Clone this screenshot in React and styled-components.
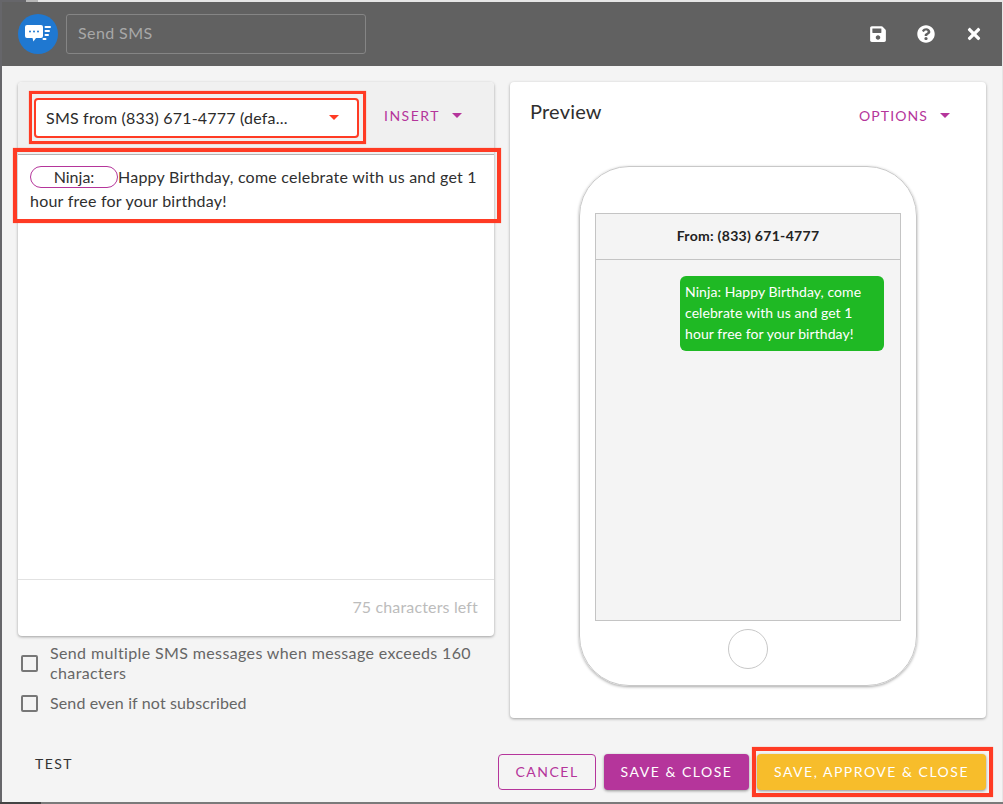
import React from 'react'
import styled, { createGlobalStyle } from 'styled-components'
import { FaSave, FaQuestionCircle, FaTimes } from 'react-icons/fa'

const purple = '#b5359b'
const annotation = '#ff3b24'

const GlobalStyle = createGlobalStyle`
  html, body {
    margin: 0;
    padding: 0;
    background: #66666a;
    font-family: Lato, "Noto Sans", sans-serif;
  }
  * { box-sizing: border-box; }
`

const Screen = styled.div`
  width: 1003px;
  height: 804px;
  overflow: hidden;
  position: relative;
  padding: 2px 0 2px 2px;
  background:
    linear-gradient(to right, #66666a 26px, #b8b8b8 26px, #b8b8b8 38px, #e6e6e6 38px) top / 100% 2px no-repeat,
    linear-gradient(to right, #444 41px, #7a7a7a 41px) bottom / 100% 2px no-repeat,
    linear-gradient(to right, #66666a 2px, #e6e6e6 2px);
`

const Dialog = styled.div`
  width: 1000px;
  height: 800px;
  background: #f4f4f4;
  display: flex;
  flex-direction: column;
`

const Header = styled.header`
  height: 64px;
  flex: none;
  background: #616161;
  display: flex;
  align-items: center;
  padding: 0 16px;
`

const LogoCircle = styled.div`
  width: 40px;
  height: 40px;
  border-radius: 50%;
  background: #1f78d1;
  display: flex;
  align-items: center;
  justify-content: center;
  flex: none;
`

const TitleInput = styled.div`
  width: 300px;
  height: 40px;
  margin-left: 8px;
  border: 1px solid #858585;
  border-radius: 3px;
  padding: 0 11px 3px;
  display: flex;
  align-items: center;
  font-size: 16px;
  letter-spacing: 0.4px;
  color: #a8a8a8;
`

const HeaderIcons = styled.div`
  margin-left: auto;
  margin-right: 3px;
  display: flex;
  align-items: center;
  gap: 30px;
  color: #fff;
  font-size: 18px;
  svg { display: block; }
`

const Content = styled.div`
  flex: 1;
  display: flex;
  gap: 16px;
  padding: 16px 16px 0;
`

const LeftColumn = styled.div`
  width: 476px;
  display: flex;
  flex-direction: column;
`

const Card = styled.section`
  background: #fff;
  border-radius: 4px;
  box-shadow: 0 1px 3px rgba(0, 0, 0, 0.35);
`

const EditorCard = styled(Card)`
  height: 554px;
  display: flex;
  flex-direction: column;
  overflow: hidden;
`

const Toolbar = styled.div`
  height: 73px;
  flex: none;
  background: #f0f0f0;
  border-bottom: 1px solid #b4b4b4;
  padding: 16px 16px 0;
  display: flex;
  align-items: flex-start;
`

const Select = styled.div`
  width: 325px;
  height: 40px;
  background: #fff;
  border: 2px solid ${annotation};
  border-radius: 4px;
  display: flex;
  align-items: center;
  padding: 0 18px 2px 10px;
  font-size: 16px;
  letter-spacing: 0.2px;
  color: #2b2b2b;
  white-space: nowrap;
`

const SelectLabel = styled.span`
  flex: 1;
`

const Caret = styled.span`
  display: inline-block;
  width: 0;
  height: 0;
  border-left: 5px solid transparent;
  border-right: 5px solid transparent;
  border-top: 5px solid ${({ $color }) => $color};
`

const TextAction = styled.div`
  display: flex;
  align-items: center;
  gap: 12px;
  font-size: 14px;
  color: ${purple};
`

const InsertAction = styled(TextAction)`
  height: 34px;
  margin-left: 25px;
  letter-spacing: 1.5px;
`

const Message = styled.div`
  flex: 1;
  padding: 10px 12px;
  font-size: 16px;
  line-height: 24px;
  letter-spacing: 0.23px;
  color: #2f2f2f;
`

const Tag = styled.span`
  display: inline-block;
  width: 88px;
  height: 22px;
  line-height: 20px;
  border: 1px solid ${purple};
  border-radius: 11px;
  text-align: center;
  letter-spacing: 0;
`

const CounterRow = styled.div`
  height: 57px;
  flex: none;
  border-top: 1px solid #e2e2e2;
  display: flex;
  align-items: center;
  justify-content: flex-end;
  padding: 0 16px 3px;
  font-size: 16px;
  letter-spacing: 0.15px;
  color: #bcbcbc;
`

const CheckList = styled.div`
  display: flex;
  flex-direction: column;
  gap: 10px;
  margin-top: 7px;
  padding-left: 3px;
`

const CheckRow = styled.label`
  display: flex;
  align-items: center;
  gap: 12px;
  font-size: 16px;
  line-height: 20px;
  letter-spacing: ${({ $spacing }) => $spacing}px;
  color: #666;
`

const CheckBox = styled.span`
  width: 17px;
  height: 17px;
  flex: none;
  border: 2px solid #777;
  border-radius: 2px;
`

const PreviewCard = styled(Card)`
  width: 476px;
  height: 636px;
  padding: 0 20px;
  display: flex;
  flex-direction: column;
`

const PreviewHead = styled.div`
  height: 84px;
  flex: none;
  display: flex;
  justify-content: space-between;
  padding-top: 15px;
`

const PreviewTitle = styled.h2`
  margin: 0;
  font-size: 20px;
  line-height: 28px;
  font-weight: 400;
  letter-spacing: 0.2px;
  color: #2f2f2f;
`

const OptionsAction = styled(TextAction)`
  height: 36px;
  margin-right: 16px;
  letter-spacing: 1.1px;
`

const Phone = styled.div`
  width: 338px;
  height: 520px;
  margin-left: 49px;
  border: 1px solid #c8c8c8;
  border-radius: 50px;
  box-shadow: 0 1px 3px rgba(0, 0, 0, 0.35);
  padding: 46px 15px 0;
  display: flex;
  flex-direction: column;
  align-items: center;
`

const PhoneScreen = styled.div`
  width: 306px;
  height: 408px;
  flex: none;
  background: #f4f4f4;
  border: 1px solid #c4c4c4;
`

const PhoneHeader = styled.div`
  height: 46px;
  border-bottom: 1px solid #c4c4c4;
  display: flex;
  align-items: center;
  justify-content: center;
  padding-bottom: 2px;
  font-size: 14px;
  font-weight: 700;
  letter-spacing: 0.3px;
  color: #222;
`

const Bubble = styled.div`
  width: 204px;
  height: 75px;
  margin: 16px 16px 0 auto;
  padding: 5px 5px;
  background: #1fb924;
  border-radius: 6px;
  font-size: 14px;
  line-height: 21px;
  letter-spacing: 0.07px;
  color: #fff;
`

const HomeButton = styled.div`
  width: 40px;
  height: 40px;
  margin-top: 8px;
  border: 1px solid #c8c8c8;
  border-radius: 50%;
`

const Footer = styled.footer`
  height: 68px;
  flex: none;
  display: flex;
  align-items: flex-start;
  gap: 8px;
  padding: 20px 16px 0 33px;
`

const TestLink = styled.div`
  margin-right: auto;
  height: 20px;
  font-size: 14px;
  line-height: 20px;
  letter-spacing: 1.4px;
  color: #333;
`

const Button = styled.button`
  height: 36px;
  border-radius: 4px;
  font-family: inherit;
  font-size: 14px;
  letter-spacing: 1.5px;
  width: ${({ $width }) => $width}px;
  padding: 0 0 2px;
  white-space: nowrap;
  color: ${({ $variant }) => ($variant === 'outline' ? purple : '#fff')};
  background: ${({ $variant }) =>
    $variant === 'outline' ? 'transparent' : $variant === 'approve' ? '#f7bd2b' : purple};
  border: ${({ $variant }) => ($variant === 'outline' ? `1px solid ${purple}` : 'none')};
  box-shadow: ${({ $variant }) => ($variant === 'outline' ? 'none' : '0 1px 3px rgba(0, 0, 0, 0.4)')};
`

// red markup boxes drawn over the screenshot
const Highlight = styled.div`
  position: absolute;
  left: ${({ $x }) => $x}px;
  top: ${({ $y }) => $y}px;
  width: ${({ $w }) => $w}px;
  height: ${({ $h }) => $h}px;
  border: ${({ $line }) => $line}px solid ${annotation};
  box-shadow: 0 0 1px rgba(255, 59, 36, 0.6);
  pointer-events: none;
`

const SmsLogo = () => (
  <svg width="26" height="18" viewBox="0 0 26 18" fill="#fff">
    <path d="M2 0h14a2 2 0 0 1 2 2v9a2 2 0 0 1-2 2h-5l-2.600 3.500L7.500 13H2a2 2 0 0 1-2-2V2a2 2 0 0 1 2-2z" />
    <circle cx="5" cy="6.500" r="1" fill="#1f78d1" />
    <circle cx="9" cy="6.500" r="1" fill="#1f78d1" />
    <circle cx="13" cy="6.500" r="1" fill="#1f78d1" />
    <rect x="19.500" y="1" width="6.500" height="2" rx="1" />
    <rect x="19.500" y="5" width="5.500" height="2" rx="1" />
    <rect x="19.500" y="9" width="4.500" height="2" rx="1" />
    <rect x="17.500" y="13" width="4" height="2" rx="1" />
  </svg>
)

const App = () => {
  return (
    <Screen>
      <GlobalStyle />
      <Dialog>
        <Header>
          <LogoCircle>
            <SmsLogo />
          </LogoCircle>
          <TitleInput>Send SMS</TitleInput>
          <HeaderIcons>
            <FaSave />
            <FaQuestionCircle />
            <FaTimes />
          </HeaderIcons>
        </Header>
        <Content>
          <LeftColumn>
            <EditorCard>
              <Toolbar>
                <Select>
                  <SelectLabel>SMS from (833) 671-4777 (defa...</SelectLabel>
                  <Caret $color={annotation} />
                </Select>
                <InsertAction>
                  INSERT
                  <Caret $color={purple} />
                </InsertAction>
              </Toolbar>
              <Message>
                <Tag>Ninja:</Tag>
                <span>Happy Birthday, come celebrate with us and get 1 hour free for your birthday!</span>
              </Message>
              <CounterRow>75 characters left</CounterRow>
            </EditorCard>
            <CheckList>
              <CheckRow $spacing={0.37}>
                <CheckBox />
                Send multiple SMS messages when message exceeds 160 characters
              </CheckRow>
              <CheckRow $spacing={0.13}>
                <CheckBox />
                Send even if not subscribed
              </CheckRow>
            </CheckList>
          </LeftColumn>
          <PreviewCard>
            <PreviewHead>
              <PreviewTitle>Preview</PreviewTitle>
              <OptionsAction>
                OPTIONS
                <Caret $color={purple} />
              </OptionsAction>
            </PreviewHead>
            <Phone>
              <PhoneScreen>
                <PhoneHeader>From: (833) 671-4777</PhoneHeader>
                <Bubble>Ninja: Happy Birthday, come celebrate with us and get 1 hour free for your birthday!</Bubble>
              </PhoneScreen>
              <HomeButton />
            </Phone>
          </PreviewCard>
        </Content>
        <Footer>
          <TestLink>TEST</TestLink>
          <Button $variant="outline" $width={98}>CANCEL</Button>
          <Button $width={145}>SAVE &amp; CLOSE</Button>
          <Button $variant="approve" $width={229}>SAVE, APPROVE &amp; CLOSE</Button>
        </Footer>
      </Dialog>
      <Highlight $x={29} $y={91} $w={337} $h={53} $line={3} />
      <Highlight $x={13} $y={148} $w={488} $h={75} $line={4} />
      <Highlight $x={752} $y={747} $w={241} $h={50} $line={4} />
    </Screen>
  )
}

export default App
